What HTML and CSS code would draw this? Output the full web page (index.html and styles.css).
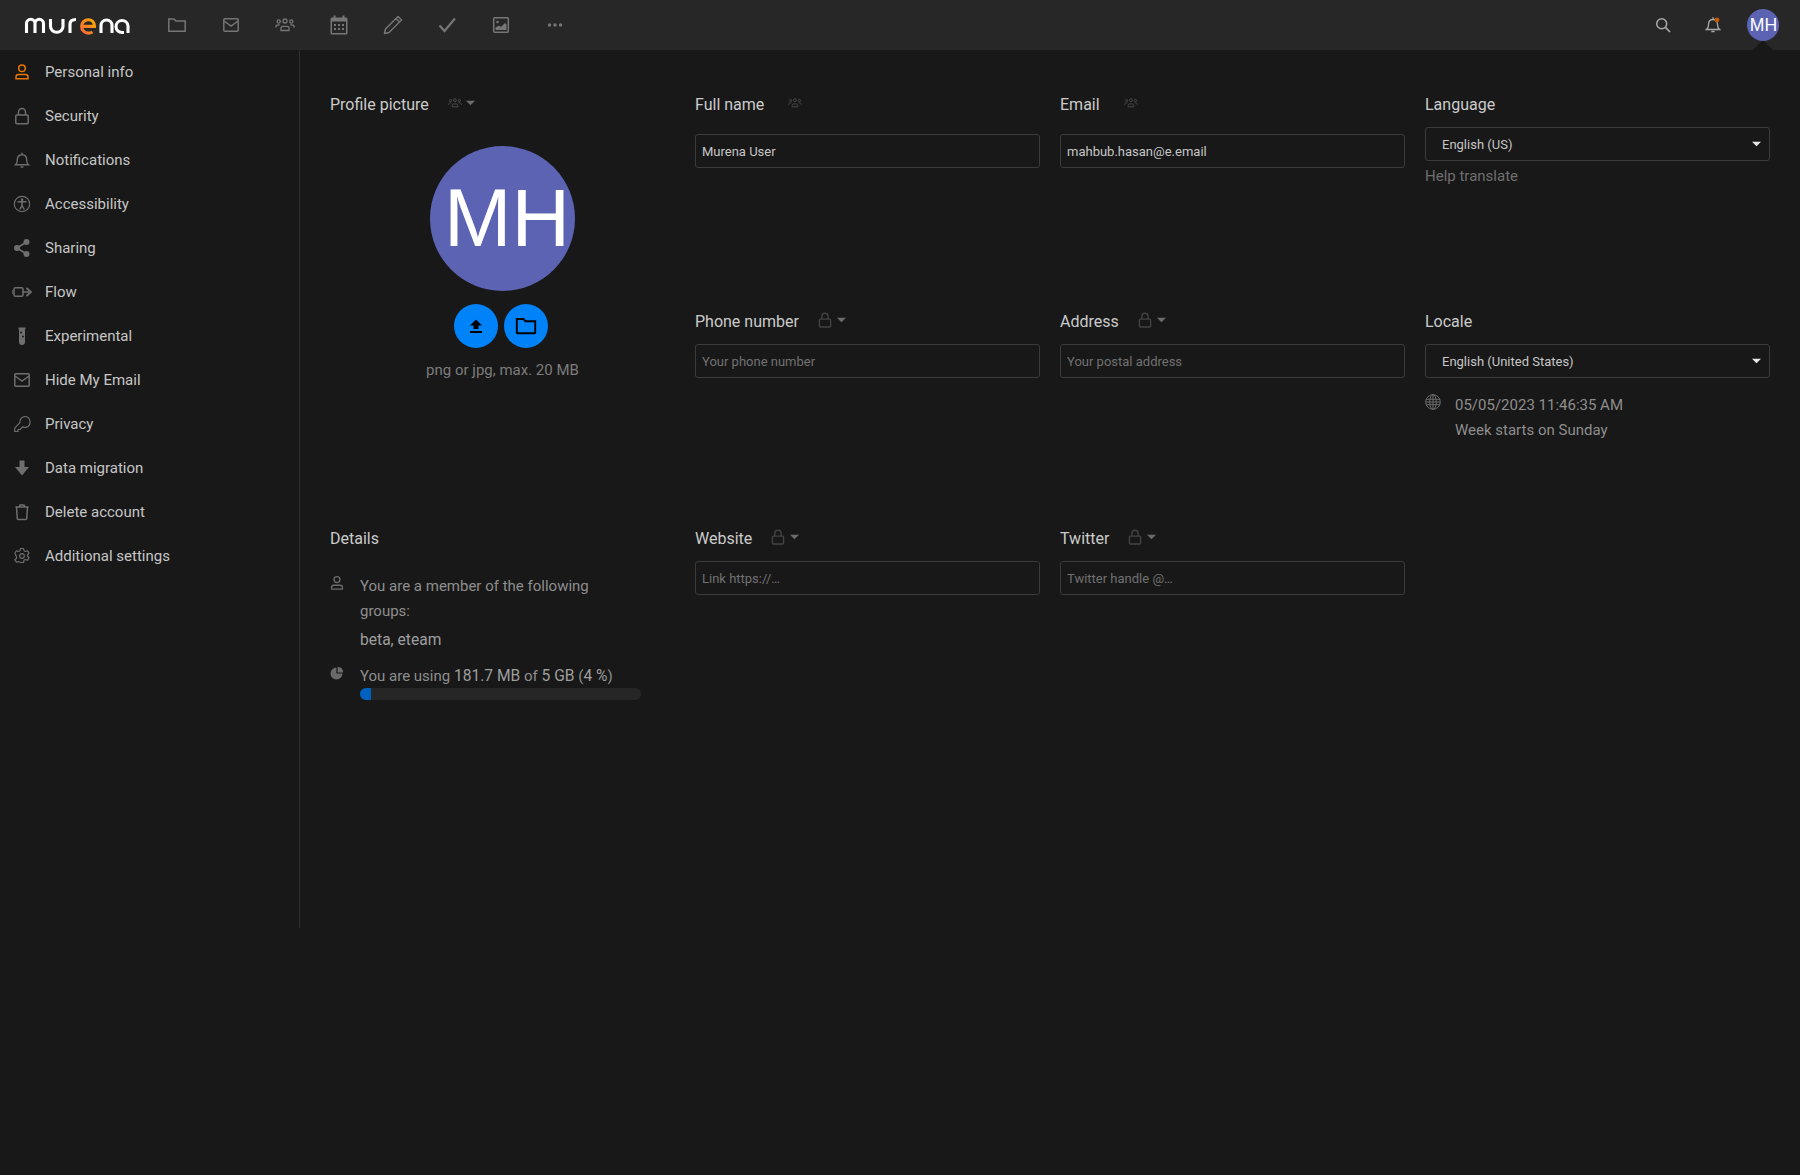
FILE: index.html
```html
<!DOCTYPE html>
<html lang="en">
<head>
<meta charset="utf-8">
<title>Personal info</title>
<link rel="stylesheet" href="styles.css">
</head>
<body>
<svg class="sprite" aria-hidden="true">
  <defs>
    <symbol id="i-group" viewBox="0 0 20 20"><g fill="none" stroke="currentColor" stroke-width="1.3"><circle cx="10" cy="6" r="2"/><circle cx="3.7" cy="6.500" r="1.600"/><circle cx="16.300" cy="6.500" r="1.600"/><path d="M6 15.500v-2.200c0-1.200 1-2 2-2h4c1 0 2 .8 2 2v2.200z"/><path d="M.8 12.500c0-1.500 1-2.600 2.600-2.600h1.400M19.200 12.500c0-1.500-1-2.600-2.600-2.600h-1.400"/></g></symbol>
    <symbol id="i-lock" viewBox="0 0 20 20"><g fill="none" stroke="currentColor" stroke-width="1.500"><rect x="3.800" y="9" width="12.400" height="8.800" rx="1"/><path d="M6.500 9V6a3.500 3.500 0 0 1 7 0v3"/></g></symbol>
    <symbol id="i-caret" viewBox="0 0 10 6"><path d="M0 .5h10L5 5.500z" fill="currentColor"/></symbol>
    <symbol id="i-mail" viewBox="0 0 20 20"><g fill="none" stroke="currentColor" stroke-width="1.500"><rect x="2.800" y="3.800" width="14.400" height="12.400" rx="1"/><path d="M3 6l7 5 7-5"/></g></symbol>
    <symbol id="i-person" viewBox="0 0 20 20"><g fill="none" stroke="currentColor" stroke-width="1.500"><circle cx="10" cy="6.200" r="3.300"/><path d="M4 16.800v-2c0-1.400 1.200-2.300 2.500-2.300h7c1.300 0 2.500.9 2.500 2.300v2z"/></g></symbol>
  </defs>
</svg>

<header class="topbar">
  <a class="logo" href="#" aria-label="murena">
    <svg width="110" height="24" viewBox="0 0 110 24" fill="none" stroke-width="3.100" stroke="#fff" stroke-linecap="butt">
      <defs><linearGradient id="logoE" x1="0" y1="1" x2="1" y2="0"><stop offset="0" stop-color="#f5673c"/><stop offset="1" stop-color="#fbaa00"/></linearGradient></defs>
      <path d="M2.500 20V10.500a4 4 0 0 1 8.500 0V20M11 10.500a4 4 0 0 1 8.500 0V20"/>
      <path d="M26.500 6V13.500a6 5.500 0 0 0 12.500 0V6"/>
      <path d="M46 20V11c0-3 2-4.500 6-4.500"/>
      <path d="M58.500 13.400h12c0-4-2.500-6.700-6.200-6.700a6.700 6.700 0 0 0 0 13.400c1.700 0 3-.4 4.200-1.100" stroke="url(#logoE)"/>
      <path d="M77 20V12.500a5.500 5.500 0 0 1 11 0V20"/>
      <path d="M104 20V13a6 6 0 1 0-6 6.500h2"/>
    </svg>
  </a>
  <nav class="apps">
    <a class="app" href="#"><svg width="20" height="20" viewBox="0 0 20 20"><path d="M1.800 4h5.200l1.800 2h9.400v10.200H1.800z" fill="none" stroke="currentColor" stroke-width="1.500"/></svg></a>
    <a class="app" href="#"><svg width="20" height="20"><use href="#i-mail"/></svg></a>
    <a class="app" href="#"><svg width="20" height="20"><use href="#i-group"/></svg></a>
    <a class="app" href="#"><svg width="20" height="20" viewBox="0 0 20 20"><g fill="currentColor"><path d="M3 2.500h14a1.500 1.500 0 0 1 1.500 1.500v14a1.500 1.500 0 0 1-1.500 1.500H3A1.500 1.500 0 0 1 1.500 18V4A1.500 1.500 0 0 1 3 2.500zM3 6.500V18h14V6.500z" fill-rule="evenodd"/><rect x="4.500" y="0.500" width="2" height="3"/><rect x="13.500" y="0.500" width="2" height="3"/><rect x="5" y="9" width="2" height="2"/><rect x="9" y="9" width="2" height="2"/><rect x="13" y="9" width="2" height="2"/><rect x="5" y="13" width="2" height="2"/><rect x="9" y="13" width="2" height="2"/><rect x="13" y="13" width="2" height="2"/></g></svg></a>
    <a class="app" href="#"><svg width="20" height="20" viewBox="0 0 20 20"><path d="M15 1.500l3.500 3.500L6 17.500l-4.500 1 1-4.500zM13 3.500l3.500 3.500" fill="none" stroke="currentColor" stroke-width="1.500" stroke-linejoin="round"/></svg></a>
    <a class="app" href="#"><svg width="20" height="20" viewBox="0 0 20 20"><path d="M2.500 10.500l5 5.500L18 3.500" fill="none" stroke="currentColor" stroke-width="2.200"/></svg></a>
    <a class="app" href="#"><svg width="20" height="20" viewBox="0 0 20 20"><rect x="2.700" y="2.700" width="14.600" height="14.600" rx="1" fill="none" stroke="currentColor" stroke-width="1.500"/><path d="M4.500 15v-2.500l3.500-2 2 1.500 4-4 1.500 1.500V15z" fill="currentColor"/><circle cx="6.500" cy="7" r="1.300" fill="currentColor"/></svg></a>
    <a class="app" href="#"><svg width="20" height="20" viewBox="0 0 20 20"><g fill="currentColor"><circle cx="4.500" cy="10" r="1.700"/><circle cx="10" cy="10" r="1.700"/><circle cx="15.500" cy="10" r="1.700"/></g></svg></a>
  </nav>
  <div class="top-actions">
    <a class="action" href="#"><svg width="16" height="16" viewBox="0 0 16 16"><circle cx="6.700" cy="6.700" r="5" fill="none" stroke="currentColor" stroke-width="1.500"/><path d="M10.400 10.400l4.600 4.600" stroke="currentColor" stroke-width="1.700"/></svg></a>
    <a class="action" href="#"><svg width="16" height="18" viewBox="0 0 16 18"><path d="M1.500 13.500c1.500-1 2-2.500 2-5 0-2.800 1.500-5 4.500-5s4.500 2.200 4.500 5c0 2.500.5 4 2 5z" fill="none" stroke="currentColor" stroke-width="1.300"/><path d="M6.300 15.500h3.400" stroke="currentColor" stroke-width="1.500"/><path d="M8 3V1.200" stroke="currentColor" stroke-width="1.300"/><circle cx="12" cy="4" r="2.400" fill="#c45a00"/></svg></a>
    <div class="user"><span class="avatar avatar--small">MH</span></div>
  </div>
</header>

<div class="content">
  <aside class="sidebar">
    <ul class="menu">
      <li class="menu-item menu-item--active"><span class="menu-icon"><svg width="20" height="20"><use href="#i-person"/></svg></span>Personal info</li>
      <li class="menu-item"><span class="menu-icon"><svg width="20" height="20"><use href="#i-lock"/></svg></span>Security</li>
      <li class="menu-item"><span class="menu-icon"><svg width="20" height="20" viewBox="0 0 20 20"><path d="M3.500 14.800c1-.8 1.800-2 1.800-4.800 0-3 1.800-5.300 4.700-5.300s4.700 2.300 4.700 5.300c0 2.800.8 4 1.800 4.800z" fill="none" stroke="currentColor" stroke-width="1.400"/><path d="M10 4.500V2.800M8.600 17h2.800" stroke="currentColor" stroke-width="1.500"/></svg></span>Notifications</li>
      <li class="menu-item"><span class="menu-icon"><svg width="20" height="20" viewBox="0 0 20 20"><circle cx="10" cy="10" r="7.700" fill="none" stroke="currentColor" stroke-width="1.200"/><circle cx="10" cy="5.800" r="1.400" fill="currentColor"/><path d="M5.500 7.800h9M10 8v3.500M10 11.500l-2.300 4M10 11.500l2.300 4" fill="none" stroke="currentColor" stroke-width="1.500"/></svg></span>Accessibility</li>
      <li class="menu-item"><span class="menu-icon"><svg width="20" height="20" viewBox="0 0 20 20"><g fill="currentColor"><circle cx="14.500" cy="4" r="3"/><circle cx="14.500" cy="16" r="3"/><circle cx="5" cy="10" r="3"/></g><path d="M14.500 4L5 10l9.500 6" fill="none" stroke="currentColor" stroke-width="1.800"/></svg></span>Sharing</li>
      <li class="menu-item"><span class="menu-icon"><svg width="20" height="20" viewBox="0 0 20 20"><rect x="2" y="5.800" width="9" height="8.400" rx="1.500" fill="none" stroke="currentColor" stroke-width="1.500"/><path d="M0 8v4M10.500 10h6.500" stroke="currentColor" stroke-width="1.500"/><path d="M14.500 6l4.500 4-4.500 4" fill="none" stroke="currentColor" stroke-width="1.800"/></svg></span>Flow</li>
      <li class="menu-item"><span class="menu-icon"><svg width="20" height="20" viewBox="0 0 20 20"><path d="M6.500 1.500h7v1.500h-.5v13a3 3 0 0 1-6 0V3h-.5z" fill="currentColor"/><circle cx="9" cy="6.500" r="1" fill="#181818"/><circle cx="11" cy="10.500" r="1" fill="#181818"/></svg></span>Experimental</li>
      <li class="menu-item"><span class="menu-icon"><svg width="20" height="20"><use href="#i-mail"/></svg></span>Hide My Email</li>
      <li class="menu-item"><span class="menu-icon"><svg width="20" height="20" viewBox="0 0 20 20"><path d="M12.500 2.500a5.500 5.500 0 0 1 1.500 10.800 5.500 5.500 0 0 1-3.500-.4L8 15.500H6v2H2.700v-3.300l5.200-5.500a5.500 5.500 0 0 1 4.600-6.200z" fill="none" stroke="currentColor" stroke-width="1.200" stroke-linejoin="round"/></svg></span>Privacy</li>
      <li class="menu-item"><span class="menu-icon"><svg width="20" height="20" viewBox="0 0 20 20"><path d="M7.500 2.500h5V9H17l-7 8.500L3 9h4.500z" fill="currentColor"/></svg></span>Data migration</li>
      <li class="menu-item"><span class="menu-icon"><svg width="20" height="20" viewBox="0 0 20 20"><path d="M4.500 5.500l.8 11c0 .6.500 1 1 1h7.400c.5 0 1-.4 1-1l.8-11M3.500 5h13M7.500 5l.5-2h4l.5 2" fill="none" stroke="currentColor" stroke-width="1.500"/></svg></span>Delete account</li>
      <li class="menu-item"><span class="menu-icon"><svg width="20" height="20" viewBox="0 0 20 20"><path d="M8.500 2.500h3l.5 2.200 1.500.8 2.100-.8 1.500 2.600-1.600 1.500v1.400l1.600 1.500-1.500 2.600-2.100-.8-1.500.8-.5 2.200h-3L8 16.300l-1.500-.8-2.100.8-1.500-2.600 1.600-1.500v-1.400L2.900 7.300l1.500-2.600 2.100.8L8 4.700z" fill="none" stroke="currentColor" stroke-width="1.200" stroke-linejoin="round"/><circle cx="10" cy="10" r="2.300" fill="none" stroke="currentColor" stroke-width="1.200"/></svg></span>Additional settings</li>
    </ul>
  </aside>

  <main class="settings">
    <section class="field field--picture">
      <h3 class="field-label">Profile picture<span class="scope scope--picture"><svg width="14" height="14"><use href="#i-group"/></svg><svg class="scope-caret" width="9" height="6"><use href="#i-caret"/></svg></span></h3>
      <div class="picture">
        <span class="avatar avatar--large">MH</span>
        <div class="picture-buttons">
          <button class="round-btn" type="button"><svg width="16" height="16" viewBox="0 0 16 16"><path d="M8 1.500l6 6H10.500v3.500h-5V7.500H2zM2 13h12v2H2z" fill="#000"/></svg></button>
          <button class="round-btn" type="button"><svg width="22" height="22" viewBox="0 0 22 22"><path d="M1.800 4h6.700l2 2.200h9.700v11.600c0 .3-.2.500-.5.500H2.300c-.3 0-.5-.2-.5-.5z" fill="none" stroke="#000" stroke-width="1.900"/></svg></button>
        </div>
        <p class="picture-hint">png or jpg, max. 20 MB</p>
      </div>
    </section>

    <section class="field">
      <h3 class="field-label">Full name<span class="scope scope--plain"><svg width="14" height="14"><use href="#i-group"/></svg></span></h3>
      <input class="text-input text-input--low" type="text" value="Murena User" aria-label="Full name">
    </section>
    <section class="field">
      <h3 class="field-label">Email<span class="scope scope--plain"><svg width="14" height="14"><use href="#i-group"/></svg></span></h3>
      <input class="text-input text-input--low" type="text" value="mahbub.hasan@e.email" aria-label="Email">
    </section>
    <section class="field">
      <h3 class="field-label">Language</h3>
      <div class="select">English (US)<svg class="select-caret" width="9" height="6"><use href="#i-caret"/></svg></div>
      <a class="help-link" href="#">Help translate</a>
    </section>

    <section class="field">
      <h3 class="field-label">Phone number<span class="scope scope--lock"><svg width="18" height="18"><use href="#i-lock"/></svg><svg class="scope-caret" width="9" height="6"><use href="#i-caret"/></svg></span></h3>
      <input class="text-input" type="text" placeholder="Your phone number" aria-label="Phone number">
    </section>
    <section class="field">
      <h3 class="field-label">Address<span class="scope scope--lock"><svg width="18" height="18"><use href="#i-lock"/></svg><svg class="scope-caret" width="9" height="6"><use href="#i-caret"/></svg></span></h3>
      <input class="text-input" type="text" placeholder="Your postal address" aria-label="Address">
    </section>
    <section class="field">
      <h3 class="field-label">Locale</h3>
      <div class="select">English (United States)<svg class="select-caret" width="9" height="6"><use href="#i-caret"/></svg></div>
      <div class="locale-info">
        <svg class="locale-icon" width="16" height="16" viewBox="0 0 16 16"><g fill="none" stroke="currentColor" stroke-width="1"><circle cx="8" cy="8" r="7.300"/><ellipse cx="8" cy="8" rx="3.300" ry="7.300"/><path d="M8 .7v14.600M1 5.300h14M.7 8h14.600M1 10.700h14"/></g></svg>
        <div class="locale-text"><div>05/05/2023 11:46:35 AM</div><div>Week starts on Sunday</div></div>
      </div>
    </section>

    <section class="field">
      <h3 class="field-label">Details</h3>
      <div class="details">
        <div class="detail detail--groups">
          <svg class="detail-icon detail-icon--person" width="18" height="18"><use href="#i-person"/></svg>
          <div class="detail-text">
            <p class="groups-title">You are a member of the following groups:</p>
            <p class="groups-list">beta, eteam</p>
          </div>
        </div>
        <div class="detail detail--quota">
          <svg class="detail-icon" width="14" height="14" viewBox="0 0 14 14"><path d="M7.600 .8a6 6 0 0 1 5.600 5.600H7.600z" fill="currentColor"/><path d="M6.400 1.500A6 6 0 1 0 12.500 7.600H6.400z" fill="currentColor"/></svg>
          <div class="detail-text">
            <p class="quota-text">You are using <strong>181.7 MB</strong> of <strong>5 GB</strong> (<strong>4 %</strong>)</p>
            <div class="progress"><div class="progress-fill"></div></div>
          </div>
        </div>
      </div>
    </section>
    <section class="field">
      <h3 class="field-label">Website<span class="scope scope--lock"><svg width="18" height="18"><use href="#i-lock"/></svg><svg class="scope-caret" width="9" height="6"><use href="#i-caret"/></svg></span></h3>
      <input class="text-input" type="text" placeholder="Link https://…" aria-label="Website">
    </section>
    <section class="field">
      <h3 class="field-label">Twitter<span class="scope scope--lock"><svg width="18" height="18"><use href="#i-lock"/></svg><svg class="scope-caret" width="9" height="6"><use href="#i-caret"/></svg></span></h3>
      <input class="text-input" type="text" placeholder="Twitter handle @…" aria-label="Twitter">
    </section>
  </main>
</div>
</body>
</html>
```

FILE: styles.css
```css
* { box-sizing: border-box; }

html, body {
  margin: 0;
  height: 100%;
}

body {
  background: #181818;
  color: #cbcbcb;
  font-family: Roboto, "Liberation Sans", sans-serif;
  font-size: 15px;
  overflow: hidden;
}

a { color: inherit; text-decoration: none; }

.sprite {
  position: absolute;
  width: 0;
  height: 0;
}

/* Top bar */
.topbar {
  display: flex;
  align-items: center;
  height: 50px;
  background: #272727;
}

.logo {
  display: flex;
  width: 150px;
  padding-left: 24px;
}

.apps {
  display: flex;
  color: #767676;
}

.app {
  display: flex;
  align-items: center;
  justify-content: center;
  width: 54px;
  height: 50px;
}

.top-actions {
  display: flex;
  align-items: center;
  margin-left: auto;
  padding-right: 21px;
  color: #a8a8a8;
}

.action {
  display: flex;
  align-items: center;
  justify-content: center;
  width: 50px;
  height: 50px;
}

.user {
  position: relative;
  display: flex;
  justify-content: center;
  width: 32px;
  margin-left: 9px;
}

.user::after {
  content: "";
  position: absolute;
  left: 50%;
  top: 31px;
  margin-left: -10px;
  border: 10px solid transparent;
  border-top: 0;
  border-bottom-color: #181818;
}

.avatar {
  position: relative;
  z-index: 1;
  display: flex;
  align-items: center;
  justify-content: center;
  border-radius: 50%;
  background: #5b63b2;
  color: #fff;
  font-family: "Liberation Sans", Arial, sans-serif;
}

.avatar--small {
  width: 32px;
  height: 32px;
  padding-left: 1px;
  font-size: 17.600px;
}

.avatar--large {
  width: 145px;
  height: 145px;
  padding-left: 9px;
  font-size: 81px;
}

/* Layout */
.content {
  display: flex;
  height: 878px;
}

.sidebar {
  width: 300px;
  flex: none;
  border-right: 1px solid #2f2f2f;
}

.menu {
  list-style: none;
  margin: 0;
  padding: 0;
}

.menu-item {
  display: flex;
  align-items: center;
  gap: 13px;
  height: 44px;
  padding-left: 12px;
  font-size: 15px;
  color: #c6c6c6;
}

.menu-icon {
  display: flex;
  width: 20px;
  height: 20px;
  color: #6e6e6e;
}

.menu-item--active .menu-icon { color: #e97600; }

.settings {
  display: grid;
  grid-template-columns: repeat(4, 345px);
  grid-template-rows: repeat(3, 217px);
  column-gap: 20px;
  padding: 43px 0 0 30px;
  flex: 1;
  align-content: start;
}

.field--picture { grid-row: span 2; }

.field-label {
  display: flex;
  align-items: center;
  height: 22px;
  margin: 0 0 12px;
  font-size: 16px;
  font-weight: 400;
  color: #cbcbcb;
}

.scope {
  display: inline-flex;
  align-items: center;
  margin-left: 19px;
  margin-top: -3px;
  color: #4b4b4b;
}

.scope--lock {
  margin-left: 17px;
  color: #434343;
}

.scope--lock .scope-caret { margin-left: 3px; }

.scope--picture { color: #4f4f4f; }

.scope--plain {
  margin-left: 24px;
  color: #4a4a4a;
}

.scope-caret {
  margin-left: 4px;
  color: #6b6b6b;
}

.text-input {
  display: block;
  width: 100%;
  height: 34px;
  padding: 0 6px;
  background: #181818;
  border: 1px solid #3b3b3b;
  border-radius: 3px;
  color: #c6c6c6;
  font-family: Roboto, "Liberation Sans", sans-serif;
  font-size: 13px;
  outline: none;
}

.text-input::placeholder {
  color: #717171;
  opacity: 1;
}

.text-input--low { margin-top: 19px; }

.select {
  position: relative;
  display: flex;
  align-items: center;
  height: 34px;
  padding-left: 16px;
  background: #181818;
  border: 1px solid #3b3b3b;
  border-radius: 3px;
  color: #c6c6c6;
  font-size: 13px;
}

.select-caret {
  position: absolute;
  right: 8px;
  top: 13px;
  color: #e8e8e8;
}

.help-link {
  display: block;
  margin-top: 4px;
  font-size: 15px;
  line-height: 22px;
  color: #6f6f6f;
}

/* Profile picture */
.picture {
  display: flex;
  flex-direction: column;
  align-items: center;
  margin-top: 31px;
  width: 345px;
}

.picture-buttons {
  display: flex;
  gap: 6px;
  margin-top: 13px;
  margin-right: 4px;
}

.round-btn {
  display: flex;
  align-items: center;
  justify-content: center;
  width: 44px;
  height: 44px;
  padding: 0;
  border: 0;
  border-radius: 50%;
  background: #0082f9;
}

.picture-hint {
  margin: 11px 0 0;
  font-size: 15px;
  line-height: 22px;
  color: #7c7c7c;
}

/* Locale */
.locale-info {
  display: flex;
  margin-top: 15px;
  color: #8e8e8e;
}

.locale-icon {
  flex: none;
  margin: 1px 14px 0 0;
  color: #6a6a6a;
}

.locale-text {
  font-size: 15px;
  line-height: 25px;
}

/* Details */
.details {
  padding-top: 13px;
}

.detail {
  display: flex;
  color: #8e8e8e;
}

.detail-icon {
  flex: none;
  width: 14px;
  height: 14px;
  margin: 2px 16px 0 0;
  color: #6a6a6a;
}

.detail-icon--person {
  width: 18px;
  height: 18px;
  margin: 0 14px 0 -2px;
}

.detail-text {
  width: 281px;
  font-size: 15px;
}

.groups-title {
  margin: 0;
  line-height: 25px;
}

.groups-list {
  margin: 4px 0 0;
  font-size: 15.600px;
  line-height: 25px;
  color: #9e9e9e;
}

.detail--quota {
  margin-top: 11px;
}

.quota-text {
  margin: 0;
  line-height: 25px;
}

.quota-text strong {
  font-size: 15.600px;
  font-weight: 400;
  color: #9e9e9e;
}

.progress {
  height: 12px;
  margin-top: -1px;
  border-radius: 6px;
  background: #262626;
  overflow: hidden;
}

.progress-fill {
  width: 4%;
  height: 100%;
  background: #0060c0;
}
```
